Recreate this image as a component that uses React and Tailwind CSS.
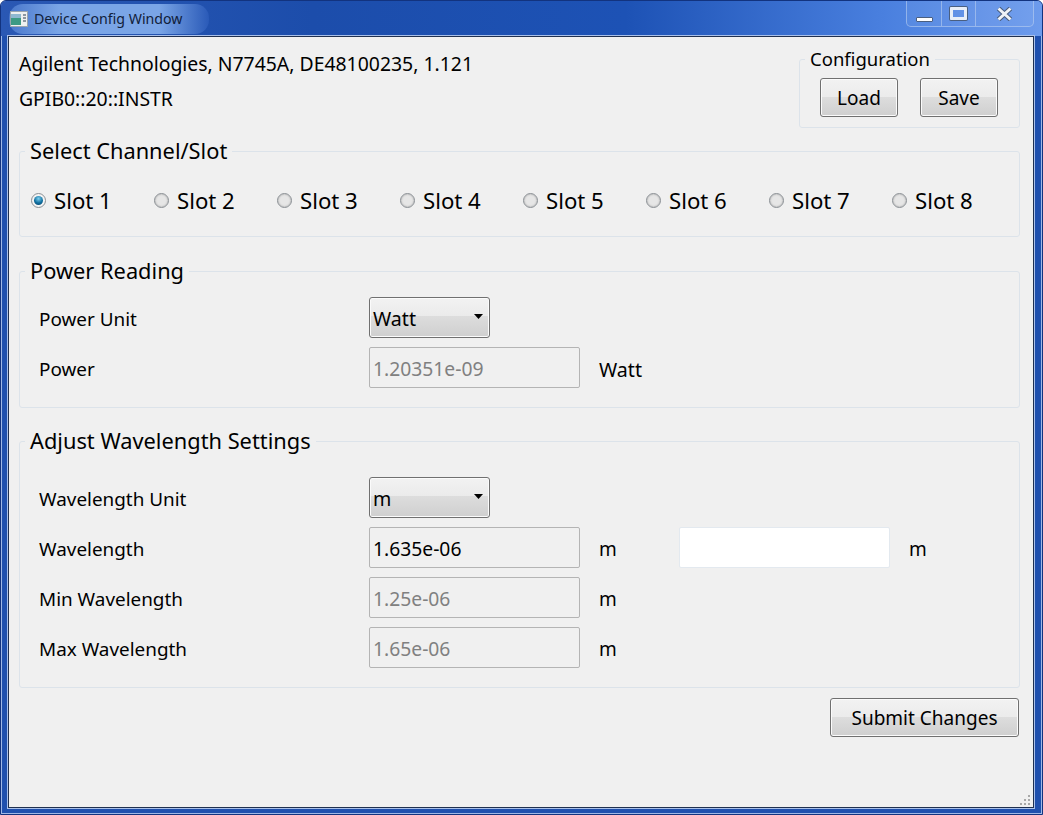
const font = "[font-family:'Noto_Sans',sans-serif]";

const slots = ['Slot 1', 'Slot 2', 'Slot 3', 'Slot 4', 'Slot 5', 'Slot 6', 'Slot 7', 'Slot 8'];

function Group({ title, small, className, children }) {
  return (
    <div className={`relative rounded-[3px] border border-[#dce3ea] ${className}`}>
      <span className={`absolute -top-[15px] left-[5px] bg-[#f0f0f0] px-[5px] leading-[28px] ${small ? 'text-[18.5px]' : 'text-[21.8px]'}`}>{title}</span>
      {children}
    </div>
  );
}

function PushButton({ label, className }) {
  return (
    <button className={`h-[39px] rounded-[3px] border border-[#707070] bg-[linear-gradient(#f2f2f2_0%,#ebebeb_49%,#dddddd_50%,#cfcfcf_100%)] pt-[1px] shadow-[inset_0_0_0_1px_#fbfbfb] ${className}`}>
      {label}
    </button>
  );
}

function Combo({ value }) {
  return (
    <div className="flex h-[41px] w-[121px] items-center justify-between rounded-[3px] border border-[#707070] bg-[linear-gradient(#f2f2f2_0%,#ebebeb_45%,#dddddd_46%,#cfcfcf_100%)] pl-[3px] pr-[6px] text-[19.6px] shadow-[inset_0_0_0_1px_#fbfbfb]">
      <span className="pt-[3px]">{value}</span>
      <svg width="9" height="5" viewBox="0 0 9 5" className="-mt-[2px]"><path d="M0 0h9L4.5 5z" fill="#000" /></svg>
    </div>
  );
}

function Field({ value, disabled, white }) {
  return (
    <div className={`flex h-[41px] w-[211px] items-center rounded-[2px] border pl-[3px] pt-[3px] text-[19.3px] ${white ? 'border-[#e3e9ef] bg-white' : 'border-[#b4b4b4] bg-[#f0f0f0]'} ${disabled ? 'text-[#808080]' : ''}`}>
      {value}
    </div>
  );
}

function Row({ label, children }) {
  return (
    <div className="flex h-[41px] items-center">
      <span className="w-[330px] shrink-0 pt-[4px] text-[18.9px]">{label}</span>
      {children}
    </div>
  );
}

function CaptionButtons() {
  return (
    <div className="absolute right-[8px] top-0 flex h-[26px] w-[128px] overflow-hidden rounded-b-[5px] border border-t-0 border-[#b9cff0]/60 bg-white/5">
      <div className="flex w-[35px] items-end justify-center border-r border-[#b9cff0]/60 pb-[4px]">
        <div className="h-[5px] w-[17px] rounded-[1px] border border-[#4a5f80] bg-white" />
      </div>
      <div className="flex w-[34px] items-center justify-center border-r border-[#b9cff0]/60">
        <div className="h-[13px] w-[17px] rounded-[1px] border-[3px] border-[#e8eef8] shadow-[0_0_0_1px_#4a5f80]" />
      </div>
      <div className="flex flex-1 items-center justify-center">
        <svg width="17" height="14" viewBox="0 0 17 14">
          <path d="M2.5 1.5l12 11M14.5 1.5l-12 11" stroke="#4a5f80" strokeWidth="5" />
          <path d="M2.5 1.5l12 11M14.5 1.5l-12 11" stroke="#eef2f8" strokeWidth="3" />
        </svg>
      </div>
    </div>
  );
}

export default function App() {
  return (
    <div className={`${font} h-[815px] w-[1043px] overflow-hidden rounded-t-[6px] border border-[#12337f] bg-[#1f50ae] text-[19px] text-black shadow-[inset_0_0_0_1px_#9fb8e6]`}>
      {/* Title bar */}
      <div className="relative flex h-[35px] items-center bg-[linear-gradient(90deg,#2a58b4_0%,#1c4dab_30%,#1d52b5_60%,#4a80df_85%,#6d9bec_100%)] pl-[8px]">
        <div className="flex h-[30px] w-[200px] items-center gap-[6px] rounded-[14px] bg-[linear-gradient(90deg,#4a78cc,#7aa5e6_25%,#7aa5e6_75%,#2a5ab8)] pl-[1px] text-[14.2px] text-[#10203a]">
          <svg width="18" height="16" viewBox="0 0 18 16" className="shrink-0">
            <rect x="0.5" y="0.5" width="17" height="15" fill="#eef0f0" stroke="#9aa4ae" />
            <rect x="1" y="3" width="10" height="11" fill="#3d9a84" />
            <rect x="1" y="3" width="10" height="4" fill="#8fb8d0" />
            <path d="M13 4h3M13 7h3M13 10h3" stroke="#6d7a86" strokeWidth="1.5" />
          </svg>
          <span>Device Config Window</span>
        </div>
        <CaptionButtons />
      </div>

      {/* Client area */}
      <div className="relative mx-[7px] h-[772px] w-[1026px] border border-[#20304f] bg-[#f0f0f0] pl-[10px] pr-[13px] shadow-[0_0_0_1px_#a9c0ea]">
        <div className="flex h-[91px] justify-between">
          <div className="pt-[13px] text-[19.4px]">
            <p className="leading-[28px]">Agilent Technologies, N7745A, DE48100235, 1.121</p>
            <p className="mt-[7px] leading-[28px]">GPIB0::20::INSTR</p>
          </div>
          <Group title="Configuration" small className="mt-[22px] flex h-[69px] w-[221px] items-start gap-[22px] pl-[20px] pt-[18px]">
            <PushButton label="Load" className="w-[78px]" />
            <PushButton label="Save" className="w-[78px]" />
          </Group>
        </div>

        <Group title="Select Channel/Slot" className="mt-[23px] flex h-[86px] pl-[11px] pt-[35px] text-[22.2px]">
          {slots.map((s, i) => (
            <label key={s} className="flex h-[28px] w-[123px] items-center gap-[8px]">
              <span className={`-mt-[2px] flex size-[15px] items-center justify-center rounded-full border border-[#8a8f94] ${i === 0 ? 'bg-[#f4f4f4]' : 'bg-[#e6e6e6] shadow-[inset_0_0_2px_#9a9a9a]'}`}>
                {i === 0 && <span className="size-[9px] rounded-full bg-[radial-gradient(circle_at_50%_30%,#7fd0f0,#0f6f9f_55%,#0a3f66)]" />}
              </span>
              {s}
            </label>
          ))}
        </Group>

        <Group title="Power Reading" className="mt-[34px] flex h-[137px] flex-col gap-[9px] pl-[19px] pt-[25px]">
          <Row label="Power Unit"><Combo value="Watt" /></Row>
          <Row label="Power">
            <Field value="1.20351e-09" disabled />
            <span className="ml-[19px] pt-[4px] text-[19.6px]">Watt</span>
          </Row>
        </Group>

        <Group title="Adjust Wavelength Settings" className="mt-[33px] flex h-[247px] flex-col gap-[9px] pl-[19px] pt-[35px]">
          <Row label="Wavelength Unit"><Combo value="m" /></Row>
          <Row label="Wavelength">
            <Field value="1.635e-06" />
            <span className="ml-[19px] w-[80px] pt-[4px]">m</span>
            <Field white />
            <span className="ml-[19px] pt-[4px]">m</span>
          </Row>
          <Row label="Min Wavelength">
            <Field value="1.25e-06" disabled />
            <span className="ml-[19px] pt-[4px]">m</span>
          </Row>
          <Row label="Max Wavelength">
            <Field value="1.65e-06" disabled />
            <span className="ml-[19px] pt-[4px]">m</span>
          </Row>
        </Group>

        <div className="mt-[10px] flex justify-end pr-[1px]">
          <PushButton label="Submit Changes" className="w-[189px]" />
        </div>

        {/* Size grip */}
        <svg width="11" height="11" viewBox="0 0 11 11" className="absolute bottom-[1px] right-[2px]" fill="#a8a8a8">
          <rect x="8" y="0" width="2" height="2" />
          <rect x="4" y="4" width="2" height="2" /><rect x="8" y="4" width="2" height="2" />
          <rect x="0" y="8" width="2" height="2" /><rect x="4" y="8" width="2" height="2" /><rect x="8" y="8" width="2" height="2" />
        </svg>
      </div>
    </div>
  );
}
